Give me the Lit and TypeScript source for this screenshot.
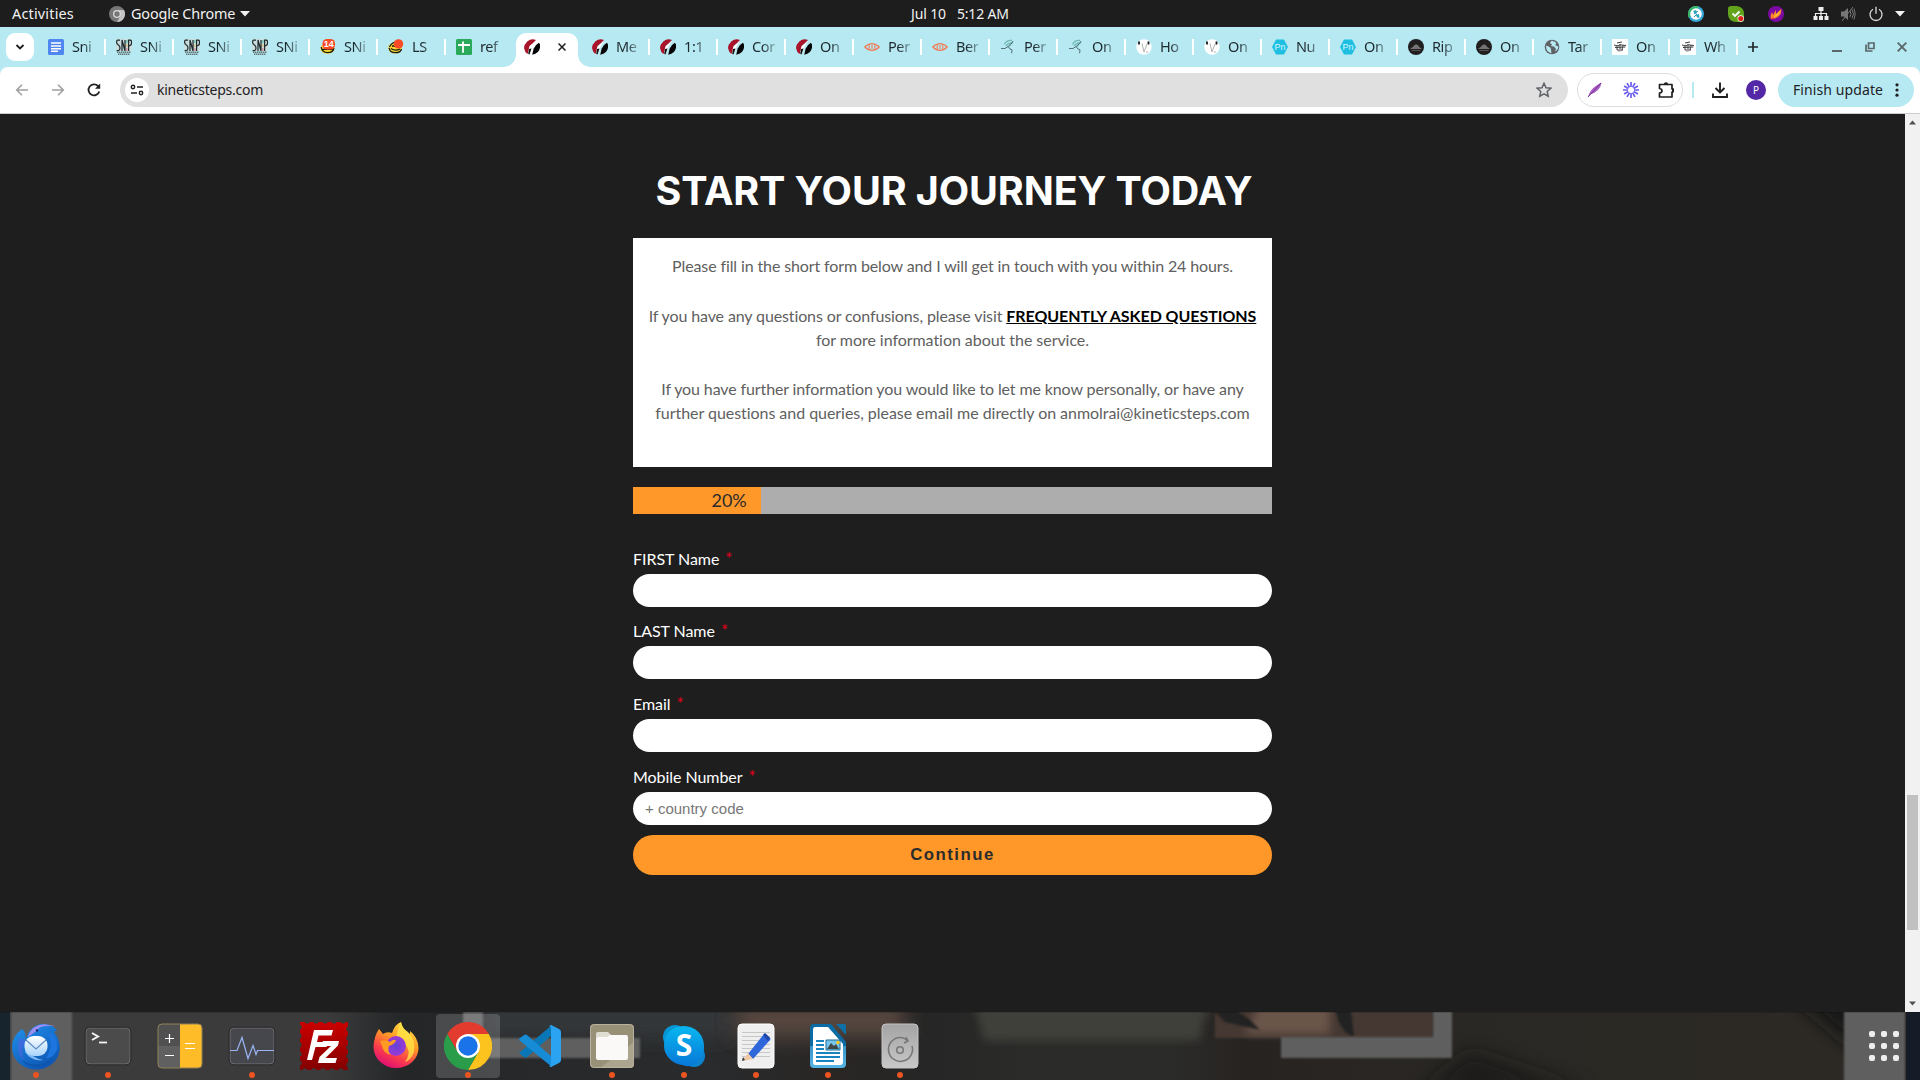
import { LitElement, html, css, svg, nothing, type TemplateResult, type SVGTemplateResult } from "lit";
import { customElement } from "lit/decorators.js";

const icon = (w: number, h: number, vb: string, body: SVGTemplateResult) =>
  html`<svg width=${w} height=${h} viewBox=${vb} fill="none" style="display:block;flex:none">${body}</svg>`;
const i16 = (b: SVGTemplateResult) => icon(16, 16, "0 0 16 16", b);
const i48 = (b: SVGTemplateResult) => icon(48, 48, "0 0 48 48", b);

const FAV: Record<string, TemplateResult> = {
  docs: i16(svg`<rect width="16" height="16" rx="1.5" fill="#4f86f0"/><path d="M3 4h10M3 7h10M3 9.7h10M3 12.3h7" stroke="#fff" stroke-width="1.4"/>`),
  snip: i16(svg`<rect width="16" height="12" fill="#c9dfe0"/><path d="M4 1H1.6Q.6 1 .6 3t1.8 3q1.6 1 1.6 3t-1.4 2.5H.6M6 12V1L9 12V1M12.6 12V1h1.6q1.4 0 1.4 2.6T14 6.5h-1" stroke="#222a2b" stroke-width="1.25"/><path d="M10.9 1v3" stroke="#43bd9a"/><path d="M10.9 5v3" stroke="#e1b95b"/><path d="M10.9 9v3" stroke="#df7181"/><path d="M1 13.3h14M2 15.2h12" stroke="#637879" stroke-width="1.4" stroke-dasharray="1.5 .5"/>`),
  badge: i16(svg`<ellipse cx="7.5" cy="9.5" rx="7" ry="5.3" fill="#f5d836"/><path d="M1.2 8q1 5.7 6.3 5.7T14 9M2.6 10.3h10" stroke="#1c1b10" stroke-width="1.3"/><rect x="2.500" y="0" width="12.500" height="10.5" rx="4.500" fill="#fb4a26"/><text x="8.800" y="8.2" text-anchor="middle" font-family="Liberation Sans" font-weight="700" font-size="9" fill="#fff">14</text>`),
  ls: i16(svg`<ellipse cx="7" cy="9" rx="6.8" ry="5.5" fill="#f5d836"/><path d="M1.2 9q.5 4.7 6 4.7T13.5 10M1.4 8Q4 3 9 3.2M3 9.5q4 3 9 .5M4 7h4" stroke="#1c1b10" stroke-width="1.3"/><circle cx="10.5" cy="4.9" r="4.7" fill="#fb4a26"/>`),
  sheet: i16(svg`<rect width="16" height="16" rx="1.5" fill="#2aa95b"/><path d="M2 6h12M7 2.6v11.2" stroke="#fff" stroke-width="1.8"/>`),
  kinetic: i16(svg`<path d="M12 1Q7.500-1 3.500 2.200 0 5.500 0 9q.6 4 3.500 6L5 11 5.500 7 8.500 4.500z" fill="#a9142b"/><path d="M4.600 15.500Q4 9.500 6 7.200L12.300 1.500 8.500 7.500 7.500 11 5.500 15.800z" fill="#fff"/><path d="M7.500 9.500 5.500 15.600l-1.300-.5L5 10z" fill="#111"/><path d="M14.9 3.700Q11 6 9.700 9.500l-1.500 6.200q3.500-.2 5.700-2.600Q16.900 9.400 15.900 5.200z" fill="#050505"/>`),
  eye: i16(svg`<path d="M.8 8Q4 4.700 8 4.700T15.200 8Q12 11.300 8 11.300T.8 8z" stroke="#ee7d59" stroke-width="1.3"/><path d="M5.200 5.500v5M10.800 5.500v5M8 6v4" stroke="#ee7d59" stroke-width="1.100"/>`),
  runner: i16(svg`<path d="M4.500 5.500q2-4.500 7.500-4M6 7q2.500-4 7-3M8 8l3-2.500" stroke="#6fb9b6" stroke-width="1.300"/><path d="M1 9.500h4l3-2 2 2.500 2 .8-.4 3.500M8.500 7 12 4l1-2" stroke="#47656b" stroke-width=".9"/>`),
  face: i16(svg`<circle cx="8" cy="8" r="7.700" fill="#fff"/><path d="M3 2.500v3M12.500 2.500v3" stroke="#161616" stroke-width="1.800"/><path d="m6 4.500 2 8.500L11 5M10 13h2" stroke="#b2b2b2" stroke-width="1"/>`),
  pn: i16(svg`<path d="M4 .5h8L16 8l-4 7.500H4L0 8z" fill="#1fbfe2"/><text x="8" y="11" text-anchor="middle" font-family="Liberation Sans" font-size="9" fill="#d7f8fd">Pn</text>`),
  rip: i16(svg`<circle cx="8" cy="8" r="8" fill="#211e20"/><path d="M2 10h12l-3-2.200-1-1.500-2-1-2 1.300-1 1.200z" fill="#777475"/><path d="M3.500 11.500h9" stroke="#777" stroke-width=".6"/>`),
  globe: i16(svg`<circle cx="8" cy="8" r="7.300" fill="#5f6368"/><path d="M2 6.500q3 1 4.500 2.200l.5 2 .5 3.500Q2 13 2 7zM7.500 1.800 6 4l2 1.500-1 1.500 3 .5 2 2.500-1 2.500q3.500-2 3.300-5l-3-1.300 1-2Q11 2 7.500 1.800z" fill="#b7e9f2"/>`),
  graf: i16(svg`<path d="M0 0h16v16H0z" fill="#fff"/><path d="m2 6 4 .8 2-1 6 .7M3 8.500l10-.5M5 11h6M5 4l5-1M5 6v5M8 5v5M11 6l-1 5" stroke="#3d3d3d" stroke-width="1"/><path d="m3 7 11 1M6 12.500l4-1" stroke="#929292" stroke-width=".7"/>`),
};

type Tab = [fav: string, title: string, sep?: boolean];
const TABS: Tab[] = [
  ["docs", "Sni"], ["snip", "SNi"], ["snip", "SNi"], ["snip", "SNi"], ["badge", "SNi"], ["ls", "LS"],
  ["sheet", "ref", false], ["kinetic", "", false], ["kinetic", "Me"], ["kinetic", "1:1"], ["kinetic", "Cor"],
  ["kinetic", "On"], ["eye", "Per"], ["eye", "Ber"], ["runner", "Per"], ["runner", "On"], ["face", "Ho"],
  ["face", "On"], ["pn", "Nu"], ["pn", "On"], ["rip", "Rip"], ["rip", "On"], ["globe", "Tar"], ["graf", "On"], ["graf", "Wh"],
];

const chromeLogo = svg`
  <path d="M3.200 12A24 24 0 0 1 44.800 12H24L13.600 30z" fill="#e33b2e"/>
  <path d="M44.800 12A24 24 0 0 1 24 48L34.400 30 24 12z" fill="#fcc31e"/>
  <path d="M24 48A24 24 0 0 1 3.200 12L13.600 30 24 36 34.400 30z" fill="#2a9d4b"/>
  <circle cx="24" cy="24" r="12" fill="#fff"/><circle cx="24" cy="24" r="9.700" fill="#1a73e8"/>`;

type App = { name: string; art: TemplateResult; dot?: boolean; active?: boolean };
const APPS: App[] = [
  { name: "mail", dot: true, art: i48(svg`
    <defs><linearGradient id="tb" x1="0" y1="0" x2=".6" y2="1"><stop stop-color="#2093ef"/><stop offset="1" stop-color="#0f57b4"/></linearGradient>
    <linearGradient id="tw" x1="0" y1="0" x2="0" y2="1"><stop stop-color="#fff"/><stop offset="1" stop-color="#a9d4fb"/></linearGradient></defs>
    <path d="M10 7Q-1 15 .2 27A24 21 0 0 0 24 47.500 23 22 0 0 0 47.800 27Q48 17 42 10l3-2Q39 1 29 2 19 4 15 14L13 19Q15 11 10 7z" fill="url(#tb)"/>
    <path d="M16 14Q20 3 32 2.200L44 4Q32 3 27 6q-2 3-4 4l-7 5z" fill="#9e8df2"/><circle cx="25" cy="8.500" r="1.200" fill="#13296c"/>
    <path d="M7 16Q3 30 12 39 8 28 14 19z" fill="#4a66e1" opacity=".7"/><path d="M35 12q8 10-1 24 8 0 11-9Q46 18 40 11z" fill="#1d76e0"/>
    <path d="M10 38q14 10 31-2-7 10-18 9-9-1-13-7z" fill="#0d55ad"/>
    <path d="M14 27q6 9 17 11-11 2-18-8z" fill="#7db9f5"/>
    <rect x="12.500" y="14" width="23" height="20" rx="9" fill="url(#tw)"/><path d="m14 18 10 9 10-9" stroke="#5f8fc4" stroke-width="1.200"/>`) },
  { name: "terminal", dot: true, art: i48(svg`<rect x="2" y="6" width="44" height="36" rx="4" fill="#4b4b4b" stroke="#707070" stroke-width="1"/><rect x="1.200" y="5.300" width="45.600" height="37.500" rx="4.500" stroke="#1f1f1f" stroke-width=".7"/><path d="m8 11 6 3.500L8 18" stroke="#f2f2f2" stroke-width="2"/><path d="M15 20.500h8" stroke="#f2f2f2" stroke-width="1.800"/>`) },
  { name: "calculator", art: i48(svg`<rect x="2" y="2" width="44" height="44" rx="4" fill="#606060"/><path d="M6 2h18v22H2V6q0-4 4-4z" fill="#505050"/><path d="M24 2h18q4 0 4 4v36q0 4-4 4H24z" fill="#fdbc28"/><rect x="2" y="2" width="44" height="44" rx="4" stroke="#8f8158"/><path d="M9 16.500h9M13.500 12v9M9 33.500h9M29 21.500h10M29 26.500h10" stroke="#fff" stroke-width="1.200"/>`) },
  { name: "monitor", dot: true, art: i48(svg`<rect x="2" y="6" width="44" height="36" rx="4" fill="#46474c" stroke="#707176" stroke-width="1"/><rect x="1.200" y="5.300" width="45.600" height="37.500" rx="4.500" stroke="#1f1f1f" stroke-width=".7"/><path d="M2 28.500h7l5-13 6 21 5-13 3 9 1.500-4H46" stroke="#99b5f4" stroke-width="1.200"/>`) },
  { name: "ftp", art: i48(svg`<defs><linearGradient id="fz" x1="0" y1="0" x2="0" y2="1"><stop stop-color="#c90000"/><stop offset="1" stop-color="#850000"/></linearGradient></defs><path d="M1.500 1.500h45v45h-45z" fill="url(#fz)"/><path d="M1.500 1.500h45v45h-45z" stroke="url(#fz)" stroke-width="3.200" stroke-linecap="round" stroke-dasharray="2.200 6.800"/><path d="M14 8h19l-1.500 5.500h-13L17 20h11l-1.500 5h-11L12 38H7zM23 19h16l-1 4.500L25.500 36H37l-1.500 5H18l1.500-6L31 24h-9.500z" fill="#fff"/>`) },
  { name: "firefox", art: i48(svg`
    <defs><linearGradient id="fx" x1=".8" y1="0" x2=".3" y2="1"><stop stop-color="#ffe646"/><stop offset=".4" stop-color="#ff9b25"/><stop offset=".7" stop-color="#fc4049"/><stop offset="1" stop-color="#df0b77"/></linearGradient>
    <radialGradient id="fp"><stop stop-color="#6342d8"/><stop offset="1" stop-color="#9c39d5"/></radialGradient></defs>
    <path d="M7 7l4 5q4-3 9-1 3-9 9-11 1 6 5 9l4 3V9q8 6 8.500 17A22.500 20 0 0 1 24 46 22.500 21 0 0 1 1.500 25Q2 14 7 7z" fill="url(#fx)"/>
    <path d="M29 0q1 6 7 10 8 8 6 20-3 8-9 10 6-8 2-15-4-6-11-7 1-10 5-18z" fill="#ffe545" opacity=".8"/>
    <circle cx="24" cy="24" r="10" fill="url(#fp)"/>
    <path d="M8 19q7-2 10 1 3-3 6-2-1 4-7 6-2 5 2 9-8-2-9-9z" fill="#ff9a23"/>`) },
  { name: "browser", dot: true, active: true, art: i48(chromeLogo) },
  { name: "editor", art: i48(svg`<path d="M3 31l5 4q2 1 3 0L36 13V3L3 31z" fill="#0877b8"/><path d="M3 18v-1l5-4q2-1 3 0l25 22v10z" fill="#168bd6"/><path d="m35 3 8 4q2 1 2 3v28q0 2-2 3l-8 4q-1 0-2-1 2 0 2-3V7q0-3-2-3z" fill="#2ba3f0"/>`) },
  { name: "files", dot: true, art: i48(svg`<rect x="2" y="2" width="44" height="44" rx="4" fill="#999078"/><path d="M46 20v22q0 4-4 4H12z" fill="#aba48f"/><rect x="2.500" y="2.500" width="43" height="43" rx="4" stroke="#b7b19e"/><path d="M8 18v-6q0-2 2-2h10l4 4v4z" fill="#dfddd2"/><path d="M8 18q0-3 3-3h8l3-2h16q2 0 2 2v21q0 2-2 2H10q-2 0-2-2z" fill="#faf9f8"/>`) },
  { name: "skype", dot: true, art: i48(svg`<defs><linearGradient id="sk" x1="0" y1="0" x2="0" y2="1"><stop stop-color="#08b7f0"/><stop offset="1" stop-color="#0878d8"/></linearGradient></defs><circle cx="15" cy="15" r="12" fill="#0796d4"/><circle cx="34" cy="34" r="11" fill="#0b83cf"/><path d="M24 4A20 20 0 0 1 44 24Q45 30 40 37 32 47 22 43A20 20 0 0 1 4 24Q4 15 9 10 15 4 24 4z" fill="url(#sk)"/><text x="24" y="34" text-anchor="middle" font-family="Open Sans" font-weight="700" font-size="30" fill="#fff">S</text>`) },
  { name: "notes", dot: true, art: i48(svg`<rect x="6" y="2" width="36" height="44" rx="4" fill="#efefef" stroke="#fff"/><path d="M10 10.500h28M10 14.500h28M10 18.500h28M10 22.500h28M10 26.500h28M10 30.500h28M10 34.500h28" stroke="#c7c7c7"/><path d="m16 32 16-20q1-1 2 0l4 4q1 1 0 2L21 37z" fill="#2f67db"/><path d="m31 13 2-2 5 5-2 3z" fill="#2046a8"/><path d="m16 31 5 6-11 2z" fill="#efc9a6"/><path d="m11 35 2 3-3 1z" fill="#333"/>`) },
  { name: "writer", dot: true, art: i48(svg`<defs><linearGradient id="lw" x1="0" y1="0" x2="0" y2="1"><stop offset=".5" stop-color="#0b6ba4"/><stop offset=".5" stop-color="#3897c9"/><stop offset="1" stop-color="#55b5e5"/></linearGradient></defs><path d="M10 2h17l15 18v22q0 4-4 4H10q-4 0-4-4V6q0-4 4-4z" fill="url(#lw)"/><path d="M11 5h13l15 17v18q0 3-3 3H11q-2 0-2-3V8q0-3 2-3z" fill="#fff"/><path d="M32 2h8q2 0 2 2v9z" fill="#0d71a8"/><path d="M12 19h8M12 23h8M12 27h8M12 31h24M12 35h24M12 39h18" stroke="#1b83bd" stroke-width="1.900"/><path d="M22 18h14v10H22z" fill="#78c6ef" stroke="#1a6b95"/><path d="m23 27 4-6 3 3 2-2 3 5z" fill="#414744"/><circle cx="34" cy="20.500" r="1.800" fill="#ffca19"/>`) },
  { name: "disk", dot: true, art: i48(svg`<defs><linearGradient id="dk" x1="0" y1="0" x2="0" y2="1"><stop stop-color="#a4a4a4"/><stop offset="1" stop-color="#c8c8c8"/></linearGradient></defs><rect x="6" y="2" width="36" height="44" rx="4" fill="url(#dk)" stroke="#c4c4c4"/><path d="M32 19q-4-4-9-3.500a12 12 0 1 0 13 8.500M28 21l4-2-2-4" stroke="#777" stroke-width="1.600"/><circle cx="24" cy="28" r="3.300" stroke="#777" stroke-width="1.600"/>`) },
];

@customElement("top-bar")
class TopBar extends LitElement {
  static styles = css`
    :host { display: grid; grid-template-columns: 1fr auto 1fr; align-items: center; height: 27px; background: #1d1d1d; color: #f2f2f2; font: 14.4px/27px "Noto Sans", sans-serif; }
    .left { display: flex; align-items: center; padding-left: 12px; }
    .act { width: 97px; letter-spacing: 0.2px; }
    .app { margin-left: 6px; width: 104px; white-space: nowrap; letter-spacing: -0.15px; }
    .caret { margin-left: 5px; }
    .mid { display: flex; gap: 11px; white-space: nowrap; font-size: 14px; letter-spacing: -0.15px; }
    .right { display: flex; align-items: center; justify-content: flex-end; padding-right: 15px; }
    .tray { display: flex; gap: 24px; margin-right: 28.500px; }
    .sys { display: flex; align-items: center; gap: 11.500px; }
  `;
  render() {
    return html`
      <div class="left">
        <span class="act">Activities</span>
        ${icon(16, 16, "0 0 48 48", svg`<circle cx="24" cy="24" r="24" fill="#777"/><path d="M44.800 12A24 24 0 0 1 24 48L34.400 30 24 12z" fill="#c4c4c4"/><circle cx="24" cy="24" r="12" fill="#d9d9d9"/><circle cx="24" cy="24" r="8" fill="#777"/>`)}
        <span class="app">Google Chrome</span>
        <span class="caret">${icon(10, 6, "0 0 10 6", svg`<path d="M0 0h10L5 5.500z" fill="#f2f2f2"/>`)}</span>
      </div>
      <div class="mid"><span>Jul 10</span><span>5:12 AM</span></div>
      <div class="right">
        <div class="tray">
          ${i16(svg`<circle cx="8" cy="8" r="8" fill="#34a6d8"/><path d="M1 12A8 8 0 0 1 11 .6L9 3 3 10z" fill="#38b36c"/><circle cx="8" cy="8" r="5.800" fill="#fff"/><path d="m5 5 3-1 1 3-2 1zM8 9l3-1 .5 4-2.500-.5z" fill="#2da6ba"/><path d="m6 8 4-3M6 11l3-3" stroke="#2a91cf"/>`)}
          ${i16(svg`<path d="M3 0h6q7 1 7 8v5q0 3-3 3H8Q0 15 0 8V3q0-3 3-3z" fill="#62a51c"/><path d="m4.500 7.500 2.500 2.500 4.500-4.500" stroke="#fff" stroke-width="1.800"/><circle cx="12.800" cy="12.500" r="3.300" fill="#fff"/><circle cx="12.800" cy="12.500" r="2.600" fill="#e02020"/>`)}
          ${i16(svg`<circle cx="8" cy="8" r="8" fill="#7d0aa5"/><path d="M3 13Q2 10 4 6l1 3 3-5v4l5-5q1 4-2 7-3 3-8 3z" fill="#fd8a24"/><path d="M4 12q3-2 8-7-1 5-8 7z" fill="#ffd13d"/><path d="m3 13 3-3-1 3z" fill="#f0303b"/>`)}
        </div>
        <div class="sys">
          ${i16(svg`<path d="M5.500 1h5v4h-5zM.5 10h4v4h-4zM6 10h4v4H6zM11.500 10h4v4h-4z" fill="#eee"/><path d="M8 5v5M2.500 10V7.500h11V10" stroke="#eee" stroke-width="1.200"/>`)}
          ${i16(svg`<path d="M1 5.500h3L8 2v12l-4-3.500H1z" fill="#777"/><path d="M10 5q2 3 0 6M12 3.500q3 4.500 0 9M14 2.500q2.500 5.500 0 11" stroke="#777"/><path d="M2 15 13 1" stroke="#777"/>`)}
          ${i16(svg`<path d="M5 3.300A6 6 0 1 0 11 3.300M8 .8v7" stroke="#ddd" stroke-width="1.300"/>`)}
          ${icon(10, 6, "0 0 10 6", svg`<path d="M0 0h10L5 5.500z" fill="#f2f2f2"/>`)}
        </div>
      </div>`;
  }
}

@customElement("tab-strip")
class TabStrip extends LitElement {
  static styles = css`
    :host { display: flex; height: 40px; background: #b7e9f2; padding-left: 6px; font: 14.5px/20px "Noto Sans", sans-serif; color: #1d2a2e; }
    .search { flex: none; width: 28px; height: 28px; margin: 6px 14px 0 0; border-radius: 9px; background: #fff; display: grid; place-items: center; }
    .tab { flex: none; width: 68px; height: 40px; display: flex; align-items: center; }
    .title { width: 26px; margin: 0 6px 2px 8px; white-space: nowrap; letter-spacing: -0.4px; -webkit-mask-image: linear-gradient(90deg, #000 40%, rgba(0, 0, 0, 0.25) 90%); }
    .sep { width: 2px; height: 16px; background: #fff; }
    .on { flex: none; width: 62px; height: 34px; margin: 6px 14px 0 -8px; border-radius: 10px 10px 0 0; background: #fff; display: flex; align-items: center; padding: 0 12px 6px 8px; box-sizing: border-box; justify-content: space-between; position: relative; }
    .on::before, .on::after { content: ""; position: absolute; bottom: 0; width: 12px; height: 12px; }
    .on::before { left: -12px; background: radial-gradient(circle at 0 0, transparent 11.5px, #fff 12px); }
    .on::after { right: -12px; background: radial-gradient(circle at 100% 0, transparent 11.5px, #fff 12px); }
    .plus { padding: 15px 0 0; }
    .win { display: flex; align-items: center; gap: 22.500px; margin-left: auto; padding-right: 13px; }
  `;
  render() {
    return html`
      <div class="search">${icon(10, 6, "0 0 10 6", svg`<path d="m1.500 1 3.500 3.500L8.500 1" stroke="#1d1d1d" stroke-width="1.800"/>`)}</div>
      ${TABS.map(([f, t, sep = true]) => t
        ? html`<div class="tab">${FAV[f]}<span class="title">${t}</span>${sep ? html`<i class="sep"></i>` : nothing}</div>`
        : html`<div class="on">${FAV[f]}${icon(8, 8, "0 0 8 8", svg`<path d="m.5.5 7 7m0-7-7 7" stroke="#1d1d1d" stroke-width="1.500"/>`)}</div>`)}
      <div class="plus">${icon(10, 10, "0 0 10 10", svg`<path d="M5 0v10M0 5h10" stroke="#22292b" stroke-width="1.700"/>`)}</div>
      <div class="win">
        ${icon(10, 10, "0 0 10 10", svg`<path d="M0 9h10" stroke="#5a686b" stroke-width="2"/>`)}
        ${icon(10, 10, "0 0 10 10", svg`<path d="M3.500 1H9v5.500H3.500zM1 2.500V9h6.500" stroke="#5a686b" stroke-width="1.700"/>`)}
        ${icon(10, 10, "0 0 10 10", svg`<path d="m.7.700 8.600 8.600m0-8.600L.7 9.300" stroke="#5a686b" stroke-width="1.900"/>`)}
      </div>`;
  }
}

@customElement("tool-bar")
class ToolBar extends LitElement {
  static styles = css`
    :host { display: block; background: #b7e9f2; }
    .bar { display: flex; align-items: center; height: 47px; box-sizing: border-box; padding: 0 6px 0 14px; background: #fff; border-radius: 8px 8px 0 0; border-bottom: 1px solid #c9cdce; font: 14.5px/20px "Noto Sans", sans-serif; color: #1f2224; }
    .nav { display: flex; gap: 20px; margin-right: 18px; }
    .omni { flex: none; width: 1448px; height: 34px; border-radius: 17px; background: #e0e0e0; display: flex; align-items: center; box-sizing: border-box; padding: 0 16px 0 5px; }
    .info { width: 24px; height: 24px; border-radius: 50%; background: #fff; display: grid; place-items: center; margin-right: 8px; }
    .url { flex: 1; font-size: 14px; letter-spacing: -0.25px; }
    .ext { margin-left: 9px; width: 106px; height: 34px; box-sizing: border-box; border: 1px solid #dedede; border-radius: 17px; display: flex; align-items: center; gap: 19.500px; padding-left: 9px; }
    .div { width: 2px; height: 16px; background: #b7e9f2; margin: 0 18px 0 9px; }
    .me { width: 20px; height: 20px; border-radius: 50%; background: #5327a5; color: #fff; font-size: 10px; text-align: center; margin: 0 12px 0 18px; }
    .upd { width: 136px; height: 34px; box-sizing: border-box; border-radius: 17px; background: #b7e9f2; display: flex; align-items: center; justify-content: space-between; padding: 0 15px 0 15px; white-space: nowrap; font-size: 14px; letter-spacing: 0.1px; }
  `;
  render() {
    return html`<div class="bar">
      <div class="nav">
        ${i16(svg`<path d="M14 8H3M8 2.700 2.700 8 8 13.300" stroke="#a0a0a0" stroke-width="1.600"/>`)}
        ${i16(svg`<path d="M2 8h11M8 2.700 13.300 8 8 13.300" stroke="#a0a0a0" stroke-width="1.600"/>`)}
        ${i16(svg`<path d="M13.300 9.500A5.500 5.500 0 1 1 12 4l1.500 1.500" stroke="#1f1f1f" stroke-width="1.800"/><path d="M14.200 1.500v5.200H9z" fill="#1f1f1f"/>`)}
      </div>
      <div class="omni">
        <span class="info">${icon(14, 12, "0 0 14 12", svg`<circle cx="3" cy="3" r="1.700" stroke="#222" stroke-width="1.400"/><path d="M7 3h6M1 9h6" stroke="#222" stroke-width="1.600"/><circle cx="11" cy="9" r="1.700" stroke="#222" stroke-width="1.400"/>`)}</span>
        <span class="url">kineticsteps.com</span>
        ${i16(svg`<path d="m8 1.300 2 4.400 4.800.5-3.600 3.200 1 4.800L8 11.800l-4.200 2.400 1-4.800L1.200 6.200 6 5.700z" stroke="#5f6368" stroke-width="1.500"/>`)}
      </div>
      <div class="ext">
        ${i16(svg`<path d="M1 15Q3 8 8 4.500T14.500.5Q14 5 11 8 8 11 3 12.500z" fill="#ab62c4"/><path d="M1 15 14 1" stroke="#6e2a94"/>`)}
        ${i16(svg`<g stroke="#6a5cf0" stroke-width="1.700"><path d="M8 0v5M8 11v5M0 8h5M11 8h5M4 1.070l2.500 4.330M9.500 10.600l2.500 4.330M1.070 4l4.330 2.500M10.600 9.500l4.330 2.500M12 1.070 9.500 5.400M6.500 10.600 4 14.930M14.930 4 10.600 6.500M5.400 9.500 1.070 12"/></g>`)}
        ${i16(svg`<path d="M1.500 2.500h12.500v4.500a1.500 1.500 0 0 1 0 3v5H1.500v-4q2.500-.3 2.500-2.200T1.500 6.500z" stroke="#1f1f1f" stroke-width="1.700" stroke-linejoin="round"/><path d="M5.800 2.500a2.200 2.200 0 0 1 4.400 0zM14 6a2.200 2.200 0 0 1 0 4.400z" fill="#1f1f1f"/>`)}
      </div>
      <i class="div"></i>
      ${i16(svg`<path d="M8 .5v9.500M3.500 6 8 10.500 12.500 6M1 11.500V15h14v-3.500" stroke="#1f1f1f" stroke-width="1.900"/>`)}
      <span class="me">P</span>
      <div class="upd"><span>Finish update</span>${icon(4, 16, "0 0 4 16", svg`<circle cx="2" cy="2.800" r="1.600" fill="#1f1f1f"/><circle cx="2" cy="8" r="1.600" fill="#1f1f1f"/><circle cx="2" cy="13.200" r="1.600" fill="#1f1f1f"/>`)}</div>
    </div>`;
  }
}

const FIELDS: [string, string][] = [["FIRST Name", ""], ["LAST Name", ""], ["Email", ""], ["Mobile Number", "+ country code"]];

@customElement("signup-page")
class SignupPage extends LitElement {
  static styles = css`
    :host { display: flex; height: 898px; background: #1e1e1e; color: #fff; font: 16px/24.4px Lato, sans-serif; }
    .page { flex: 1; display: flex; flex-direction: column; align-items: center; }
    h1 { margin: 52px 0 0; padding-left: 3px; height: 72px; font: 700 39.5px/50px Inter, sans-serif; letter-spacing: -0.12px; white-space: nowrap; }
    .card { width: 639px; height: 229px; box-sizing: border-box; padding: 16px 0 0; background: #fff; color: #606060; text-align: center; white-space: nowrap; }
    p { margin: 0 0 24.6px; }
    p:first-child { margin-bottom: 25.200px; }
    .tight { letter-spacing: -0.12px; }
    .snug { letter-spacing: -0.045px; }
    a { color: #000; font-weight: 700; text-decoration: underline; letter-spacing: -0.05px; }
    .track { width: 639px; height: 27px; margin: 20px 0 33px; background: #adadad; }
    .fill { height: 27px; box-sizing: border-box; padding-right: 14px; background: #ff9829; color: #2b2b2b; text-align: right; font-size: 18px; line-height: 26px; }
    .field { display: block; width: 639px; height: 73px; }
    .field:first-of-type { height: 72px; }
    .label { display: block; height: 27px; line-height: 24px; letter-spacing: -0.05px; }
    .label b { color: #e3001b; font-weight: 400; font-size: 17px; line-height: 20px; margin-left: 6px; }
    input { display: block; width: 639px; height: 33px; box-sizing: border-box; border: 0; border-radius: 16.5px; padding: 0 12px; background: #fff; font: 15px "Liberation Sans", sans-serif; }
    input::placeholder { color: #777; }
    button { width: 639px; height: 40px; margin-top: -3px; border: 0; border-radius: 20px; padding: 0; background: #ff9829; color: #2b2b2b; font: 700 16.8px "Liberation Sans", sans-serif; letter-spacing: 1.5px; }
    .scroll { width: 15px; background: #f1f1f1; display: flex; flex-direction: column; align-items: center; padding: 6px 0 6px; box-sizing: border-box; }
    .thumb { width: 11px; height: 135px; background: #c1c1c1; margin: 670px 0 auto; }
  `;
  render() {
    return html`
      <div class="page">
        <h1>START YOUR JOURNEY TODAY</h1>
        <div class="card">
          <p><span class="tight">Please fill in the short form below and I will get in touch with you within 24 hours.</span></p>
          <p><span class="tight">If you have any questions or confusions, please visit </span><a>FREQUENTLY ASKED QUESTIONS</a><br><span class="snug">for more information about the service.</span></p>
          <p><span class="tight">If you have further information you would like to let me know personally, or have any</span><br><span class="snug">further questions and queries, please email me directly on anmolrai@kineticsteps.com</span></p>
        </div>
        <div class="track"><div class="fill" style="width:20%">20%</div></div>
        ${FIELDS.map(([l, ph]) => html`<label class="field"><span class="label">${l}<b>*</b></span><input placeholder=${ph}></label>`)}
        <button>Continue</button>
      </div>
      <div class="scroll">
        ${icon(7, 5, "0 0 7 5", svg`<path d="M0 4.500h7L3.500.5z" fill="#505050"/>`)}
        <i class="thumb"></i>
        ${icon(7, 5, "0 0 7 5", svg`<path d="M0 .5h7L3.500 4.500z" fill="#505050"/>`)}
      </div>`;
  }
}

@customElement("app-dock")
class AppDock extends LitElement {
  static styles = css`
    :host { display: flex; position: relative; height: 68px; overflow: hidden; background: #292929; }
    .wall { position: absolute; inset: 0; }
    .apps { position: relative; display: flex; }
    .app { width: 64px; height: 64px; margin: 2px 4px; box-sizing: border-box; padding-top: 8px; border-radius: 4px; display: flex; flex-direction: column; align-items: center; }
    .active { background: rgba(255, 255, 255, 0.17); }
    .dot { width: 6px; height: 6px; flex: none; margin-top: 2px; border-radius: 50%; background: #e95420; }
    .grid { position: relative; margin: 19px 21px 0 auto; height: 30px; display: grid; grid-template-columns: repeat(3, 6px); grid-auto-rows: 6px; gap: 6px; }
    .grid i { background: #eee; border-radius: 2px; }
  `;
  render() {
    return html`
      <svg class="wall" width="1920" height="68" viewBox="0 0 1920 68">
        <defs>
          <filter id="b1"><feGaussianBlur stdDeviation="1.200"/></filter>
          <filter id="b3" x="-20%" y="-50%" width="140%" height="200%"><feGaussianBlur stdDeviation="4"/></filter>
          <filter id="b2" x="-30%" y="-100%" width="160%" height="300%"><feGaussianBlur stdDeviation="10"/></filter>
          <linearGradient id="bg"><stop offset="0" stop-color="#3b3b3b"/><stop offset=".17" stop-color="#3b3b3b"/><stop offset=".21" stop-color="#242628"/><stop offset=".37" stop-color="#292b2d"/><stop offset=".43" stop-color="#292624"/><stop offset=".49" stop-color="#262626"/><stop offset=".53" stop-color="#2b2b29"/><stop offset=".61" stop-color="#2b2b29"/><stop offset=".65" stop-color="#272321"/><stop offset=".77" stop-color="#2a2824"/><stop offset="1" stop-color="#2d2a25"/></linearGradient>
        </defs>
        <path fill="url(#bg)" d="M0 0h1920v68H0z"/>
        <path d="M480-10h250v35H480z" fill="#36393b" filter="url(#b2)"/>
        <path d="M735-10h170v36H735z" fill="#57473f" filter="url(#b2)"/>
        <path d="M974-10h238q-10 16-12 38H984z" fill="#40413b" filter="url(#b3)"/>
        <path d="M1215-10h218v36h-218z" fill="#443831" filter="url(#b1)"/>
        <path d="M1260-10h70v32h-85z" fill="#6b5548" filter="url(#b3)"/>
        <path d="M1330-10l6 10q5 22 18 24l-4-34zM1205-10l20 20 35 8-10-10-25-18z" fill="#242322" filter="url(#b1)"/>
        <path d="M1470 40l120 40h-170z" fill="#191817" opacity=".7" filter="url(#b2)"/>
        <path d="M1790-20h70v60z" fill="#171615" filter="url(#b2)"/>
        <g fill="#5f5f5f" filter="url(#b1)"><path d="M11-5h61v80H11zM463-5h20v30h-20zM483 26h157v20H483zM1433-5h19v51h-171V25h152z"/><path d="M1844-5h61v80h-61z"/></g>
        <path d="M0 0h10v68H0z" fill="#17242e"/><path d="M1906 0h14v68h-14z" fill="#161b28"/>
        <path d="M0 .5h1920" stroke="#000" stroke-opacity=".15"/>
      </svg>
      <div class="apps">${APPS.map((a) => html`<div class="app ${a.active ? "active" : ""}">${a.art}${a.dot ? html`<i class="dot"></i>` : nothing}</div>`)}</div>
      <div class="grid">${Array.from({ length: 9 }, () => html`<i></i>`)}</div>`;
  }
}

@customElement("app-root")
class AppRoot extends LitElement {
  static styles = css`
    :host { display: flex; flex-direction: column; width: 1920px; height: 1080px; overflow: hidden; }
  `;
  render() {
    return html`<top-bar></top-bar><tab-strip></tab-strip><tool-bar></tool-bar><signup-page></signup-page><app-dock></app-dock>`;
  }
}
